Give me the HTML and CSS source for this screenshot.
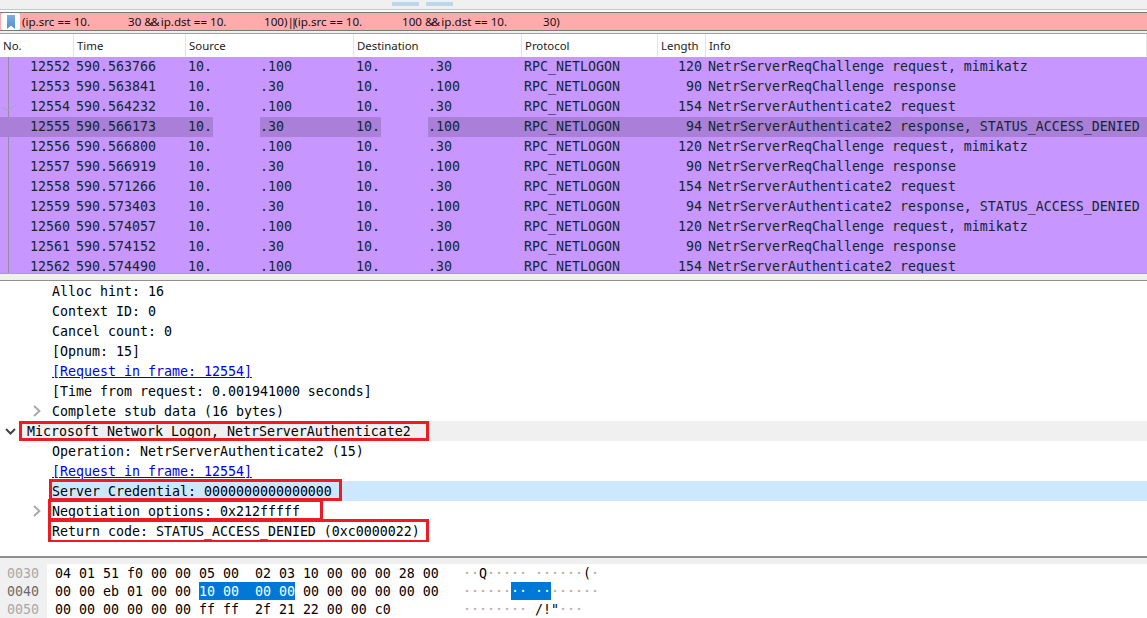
FILE: index.html
```html
<!DOCTYPE html>
<html lang="en">
<head>
<meta charset="utf-8">
<title>Wireshark capture</title>
<link rel="stylesheet" href="styles.css">
</head>
<body>
<div class="topstrip"><span class="tab"></span><span class="tab"></span></div>
<div class="filter">
  <span class="bookmark"><svg width="10" height="14" viewBox="0 0 10 14"><defs><linearGradient id="bm" x1="0" y1="0" x2="0" y2="1"><stop offset="0" stop-color="#7fb0e0"/><stop offset="1" stop-color="#4f8ed0"/></linearGradient></defs><path d="M1 0H9V14L5 10.5L1 14Z" fill="url(#bm)"/></svg></span>
  <span class="expr"><span class="f1">(ip.src == 10.</span><span class="f2">30 <span class="amp">&amp;&amp;</span> ip.dst == 10.</span><span class="f3">100)<span class="bars">|| </span>(ip.src == 10.</span><span class="f4">100 <span class="amp">&amp;&amp;</span> ip.dst == 10.</span><span>30)</span></span>
</div>
<div class="gapbar"></div>
<div class="head">
  <div class="h c-no">No.</div><div class="h c-time">Time</div><div class="h c-ip">Source</div><div class="h c-ip">Destination</div><div class="h c-proto">Protocol</div><div class="h c-len">Length</div><div class="h c-info">Info</div>
</div>
<div class="list">
  <svg class="rail" width="20" height="216" viewBox="0 0 20 216"><path d="M8.5 0V216" stroke="#8f8f9f" fill="none"/><path d="M1 50.5L8 53L17 47" stroke="#a99fc0" fill="none"/></svg>
  <div class="row"><div class="c-no num">12552</div><div class="c-time">590.563766</div><div class="c-ip"><span class="o">10.</span><span class="gap"></span><span>.100</span></div><div class="c-ip"><span class="o">10.</span><span class="gap"></span><span>.30</span></div><div class="c-proto">RPC_NETLOGON</div><div class="c-len num">120</div><div class="c-info">NetrServerReqChallenge request, mimikatz</div></div>
  <div class="row"><div class="c-no num">12553</div><div class="c-time">590.563841</div><div class="c-ip"><span class="o">10.</span><span class="gap"></span><span>.30</span></div><div class="c-ip"><span class="o">10.</span><span class="gap"></span><span>.100</span></div><div class="c-proto">RPC_NETLOGON</div><div class="c-len num">90</div><div class="c-info">NetrServerReqChallenge response</div></div>
  <div class="row"><div class="c-no num">12554</div><div class="c-time">590.564232</div><div class="c-ip"><span class="o">10.</span><span class="gap"></span><span>.100</span></div><div class="c-ip"><span class="o">10.</span><span class="gap"></span><span>.30</span></div><div class="c-proto">RPC_NETLOGON</div><div class="c-len num">154</div><div class="c-info">NetrServerAuthenticate2 request</div></div>
  <div class="row sel"><div class="c-no num">12555</div><div class="c-time">590.566173</div><div class="c-ip"><span class="o">10.</span><span class="gap"></span><span>.30</span></div><div class="c-ip"><span class="o">10.</span><span class="gap"></span><span>.100</span></div><div class="c-proto">RPC_NETLOGON</div><div class="c-len num">94</div><div class="c-info">NetrServerAuthenticate2 response, STATUS_ACCESS_DENIED</div></div>
  <div class="row"><div class="c-no num">12556</div><div class="c-time">590.566800</div><div class="c-ip"><span class="o">10.</span><span class="gap"></span><span>.100</span></div><div class="c-ip"><span class="o">10.</span><span class="gap"></span><span>.30</span></div><div class="c-proto">RPC_NETLOGON</div><div class="c-len num">120</div><div class="c-info">NetrServerReqChallenge request, mimikatz</div></div>
  <div class="row"><div class="c-no num">12557</div><div class="c-time">590.566919</div><div class="c-ip"><span class="o">10.</span><span class="gap"></span><span>.30</span></div><div class="c-ip"><span class="o">10.</span><span class="gap"></span><span>.100</span></div><div class="c-proto">RPC_NETLOGON</div><div class="c-len num">90</div><div class="c-info">NetrServerReqChallenge response</div></div>
  <div class="row"><div class="c-no num">12558</div><div class="c-time">590.571266</div><div class="c-ip"><span class="o">10.</span><span class="gap"></span><span>.100</span></div><div class="c-ip"><span class="o">10.</span><span class="gap"></span><span>.30</span></div><div class="c-proto">RPC_NETLOGON</div><div class="c-len num">154</div><div class="c-info">NetrServerAuthenticate2 request</div></div>
  <div class="row"><div class="c-no num">12559</div><div class="c-time">590.573403</div><div class="c-ip"><span class="o">10.</span><span class="gap"></span><span>.30</span></div><div class="c-ip"><span class="o">10.</span><span class="gap"></span><span>.100</span></div><div class="c-proto">RPC_NETLOGON</div><div class="c-len num">94</div><div class="c-info">NetrServerAuthenticate2 response, STATUS_ACCESS_DENIED</div></div>
  <div class="row"><div class="c-no num">12560</div><div class="c-time">590.574057</div><div class="c-ip"><span class="o">10.</span><span class="gap"></span><span>.100</span></div><div class="c-ip"><span class="o">10.</span><span class="gap"></span><span>.30</span></div><div class="c-proto">RPC_NETLOGON</div><div class="c-len num">120</div><div class="c-info">NetrServerReqChallenge request, mimikatz</div></div>
  <div class="row"><div class="c-no num">12561</div><div class="c-time">590.574152</div><div class="c-ip"><span class="o">10.</span><span class="gap"></span><span>.30</span></div><div class="c-ip"><span class="o">10.</span><span class="gap"></span><span>.100</span></div><div class="c-proto">RPC_NETLOGON</div><div class="c-len num">90</div><div class="c-info">NetrServerReqChallenge response</div></div>
  <div class="row"><div class="c-no num">12562</div><div class="c-time">590.574490</div><div class="c-ip"><span class="o">10.</span><span class="gap"></span><span>.100</span></div><div class="c-ip"><span class="o">10.</span><span class="gap"></span><span>.30</span></div><div class="c-proto">RPC_NETLOGON</div><div class="c-len num">154</div><div class="c-info">NetrServerAuthenticate2 request</div></div>
</div>
<div class="split"></div>
<div class="detail">
  <div class="line leaf">Alloc hint: 16</div>
  <div class="line leaf">Context ID: 0</div>
  <div class="line leaf">Cancel count: 0</div>
  <div class="line leaf">[Opnum: 15]</div>
  <div class="line leaf"><a class="link" href="#">[Request in frame: 12554]</a></div>
  <div class="line leaf">[Time from request: 0.001941000 seconds]</div>
  <div class="line sub"><svg class="twist" width="8" height="12" viewBox="0 0 8 12"><path d="M1 1L6.5 6L1 11" fill="none" stroke="#a6a6a6" stroke-width="1.8"/></svg>Complete stub data (16 bytes)</div>
  <div class="line top"><svg class="twist-open" width="11" height="7" viewBox="0 0 11 7"><path d="M1 1L5.5 5.5L10 1" fill="none" stroke="#444444" stroke-width="2"/></svg><span class="fill">Microsoft Network Logon, NetrServerAuthenticate2</span></div>
  <div class="line leaf">Operation: NetrServerAuthenticate2 (15)</div>
  <div class="line leaf"><a class="link" href="#">[Request in frame: 12554]</a></div>
  <div class="line picked"><span class="fill">Server Credential: 0000000000000000</span></div>
  <div class="line sub"><svg class="twist" width="8" height="12" viewBox="0 0 8 12"><path d="M1 1L6.5 6L1 11" fill="none" stroke="#a6a6a6" stroke-width="1.8"/></svg>Negotiation options: 0x212fffff</div>
  <div class="line leaf">Return code: STATUS_ACCESS_DENIED (0xc0000022)</div>
  <div class="box b1"></div>
  <div class="box b2"></div>
  <div class="box b3"></div>
  <div class="box b4"></div>
</div>
<div class="split2"></div>
<div class="hex">
  <div class="hexrow"><span class="off">0030</span><span class="bytes">04 01 51 f0 00 00 05 00  02 03 10 00 00 00 28 00</span><span class="asc">··<b>Q</b>····· ······<b>(</b>·</span></div>
  <div class="hexrow"><span class="off cur">0040</span><span class="bytes">00 00 eb 01 00 00 <i>10 00  00 00</i> 00 00 00 00 00 00</span><span class="asc">······<i>·· ··</i>······</span></div>
  <div class="hexrow"><span class="off">0050</span><span class="bytes">00 00 00 00 00 00 ff ff  2f 21 22 00 00 c0</span><span class="asc">········ <b>/!"</b>···</span></div>
</div>
</body>
</html>
```
FILE: styles.css
```css
* { box-sizing: border-box; }
html, body { margin: 0; padding: 0; height: 618px; overflow: hidden; background: #fff; }
body { font-family: "DejaVu Sans Mono", monospace; font-size: 13.29px; color: #000; }

.topstrip { height: 12px; background: linear-gradient(#f0f0f0 0, #f0f0f0 9px, #c8c8c8 9px, #c8c8c8 10px, #fafafa 10px); display: flex; gap: 7px; padding: 2px 0 0 392px; }
.tab { width: 27px; height: 4px; background: #bcd6ee; }

.filter { height: 19px; display: flex; align-items: stretch; background: #ffabab; border-top: 1px solid #7a7a7a; border-bottom: 1px solid #7a7a7a; font-family: "Noto Sans", sans-serif; font-size: 11.6px; color: #101020; }
.bookmark { width: 19px; margin-left: 1px; background: #fff; border-radius: 2px; display: flex; align-items: center; justify-content: center; flex: none; }
.expr { padding-left: 2px; line-height: 17px; white-space: pre; display: flex; }
.f1 { width: 106px; }
.f2 { width: 136px; }
.f3 { width: 138px; }
.f4 { width: 141px; }
.amp { letter-spacing: -1.8px; }
.bars { letter-spacing: -3px; }

.gapbar { height: 2px; background: #f0f0f0; }
.head { height: 24px; display: flex; border-top: 1px solid #a0a0a0; background: #fff; font-family: "Noto Sans", sans-serif; font-size: 11.4px; color: #1a1a1a; }
.h { line-height: 24px; border-right: 1px solid #e4e4e4; white-space: nowrap; }
.head .c-no, .head .c-time, .head .c-ip, .head .c-proto, .head .c-len, .head .c-info { padding: 0 0 0 3px; }

.list { position: relative; height: 216px; overflow: hidden; background: #c797ff; }
.rail { position: absolute; left: 0; top: 0; }
.row { height: 20px; display: flex; line-height: 20px; color: #12272e; white-space: pre; position: relative; }
.row.sel { background: #a97fd8; }
.c-no { width: 74px; padding-right: 4px; }
.c-time { width: 112px; padding-left: 2px; }
.c-ip { width: 168px; padding-left: 2px; display: flex; }
.c-proto { width: 136px; padding-left: 2px; }
.c-len { width: 48px; padding-right: 4px; }
.c-info { flex: 1; padding-left: 2px; }
.num { text-align: right; }
.o { width: 25px; }
.gap { width: 47px; height: 20px; background: #c797ff; }

.split { height: 8px; background: #f0f0f0; border-top: 1px solid #a4a4a4; border-bottom: 1px solid #909090; }
.detail { position: relative; height: 275px; background: #fff; }
.line { height: 20px; line-height: 22px; white-space: pre; display: flex; align-items: flex-start; }
.leaf { padding-left: 52px; }
.sub { padding-left: 33px; }
.top { padding-left: 5px; }
.fill { height: 20px; flex: 1; }
.top .fill { padding-left: 8px; background: #f0f0f0; }
.picked { padding-left: 49px; }
.picked .fill { padding-left: 3px; background: #cce8ff; }
.twist { margin-right: 11px; flex: none; align-self: center; }
.twist-open { margin-right: 3px; flex: none; align-self: center; }
.link { color: #0000ee; text-decoration: underline; }
.box { position: absolute; border: 3px solid #ed1c24; }
.b1 { left: 19px; top: 140px; width: 410px; height: 20px; }
.b2 { left: 49px; top: 198px; width: 293px; height: 22px; }
.b3 { left: 48px; top: 218px; width: 275px; height: 22px; }
.b4 { left: 48px; top: 238px; width: 381px; height: 23px; border-bottom-width: 2px; }

.split2 { height: 8px; background: #f0f0f0; border-top: 2px solid #8f8f8f; }
.hex { background: #fff; }
.hexrow { height: 18px; line-height: 20px; display: flex; white-space: pre; }
.off { width: 47px; padding-left: 7px; background: #f0f0f0; color: #a8a8a8; flex: none; }
.off.cur { color: #6a6a6a; }
.bytes { width: 416px; padding-left: 8px; flex: none; }
.bytes i, .asc i { font-style: normal; color: #fff; background: #0078d7; display: inline-block; height: 18px; }
.asc { color: #a8a8a8; }
.asc b { font-weight: normal; color: #000; }
```
